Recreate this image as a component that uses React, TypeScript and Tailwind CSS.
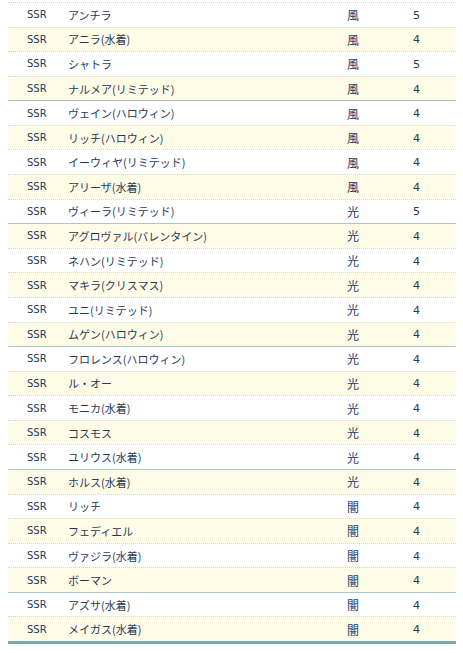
const ROWS: [string, string, string][] = [
  ['アンチラ', '風', '5'],
  ['アニラ(水着)', '風', '4'],
  ['シャトラ', '風', '5'],
  ['ナルメア(リミテッド)', '風', '4'],
  ['ヴェイン(ハロウィン)', '風', '4'],
  ['リッチ(ハロウィン)', '風', '4'],
  ['イーウィヤ(リミテッド)', '風', '4'],
  ['アリーザ(水着)', '風', '4'],
  ['ヴィーラ(リミテッド)', '光', '5'],
  ['アグロヴァル(バレンタイン)', '光', '4'],
  ['ネハン(リミテッド)', '光', '4'],
  ['マキラ(クリスマス)', '光', '4'],
  ['ユニ(リミテッド)', '光', '4'],
  ['ムゲン(ハロウィン)', '光', '4'],
  ['フロレンス(ハロウィン)', '光', '4'],
  ['ル・オー', '光', '4'],
  ['モニカ(水着)', '光', '4'],
  ['コスモス', '光', '4'],
  ['ユリウス(水着)', '光', '4'],
  ['ホルス(水着)', '光', '4'],
  ['リッチ', '闇', '4'],
  ['フェディエル', '闇', '4'],
  ['ヴァジラ(水着)', '闇', '4'],
  ['ボーマン', '闇', '4'],
  ['アズサ(水着)', '闇', '4'],
  ['メイガス(水着)', '闇', '4'],
];

export default function App() {
  return (
    <div className="min-h-[653px] bg-white pt-[2px] pl-[8px] pr-[7px]" style={{ fontFamily: '"DejaVu Sans", "Noto Sans CJK JP", sans-serif' }}>
      <div className="border-b-[3px] border-[#6fabb2]">
        {ROWS.map(([name, attr, rank], i) => {
          // solid rule every 5 rows, first group cut off at 4
          const solid = i > 0 && (i + 1) % 5 === 0;
          return (
            <div
              key={i}
              className={`grid h-[24.58px] grid-cols-[60px_279px_66px_1fr] items-center border-t pt-[1px] text-[#1f3a58] ${solid ? 'border-solid border-[#abc7cb]' : 'border-dotted border-[#d5d5d5]'} ${i % 2 === 1 ? 'bg-[#fefbe7]' : 'bg-white'}`}
            >
              <span className="pl-[19px] text-[10px] leading-none">SSR</span>
              <span className="text-[11px] leading-none" style={{ fontFamily: '"Noto Sans CJK JP", sans-serif' }}>{name}</span>
              <span className="text-[12px] leading-none text-[#1b416f]" style={{ fontFamily: '"Noto Sans CJK JP", sans-serif' }}>{attr}</span>
              <span className="text-[11px] leading-none">{rank}</span>
            </div>
          );
        })}
      </div>
    </div>
  );
}
